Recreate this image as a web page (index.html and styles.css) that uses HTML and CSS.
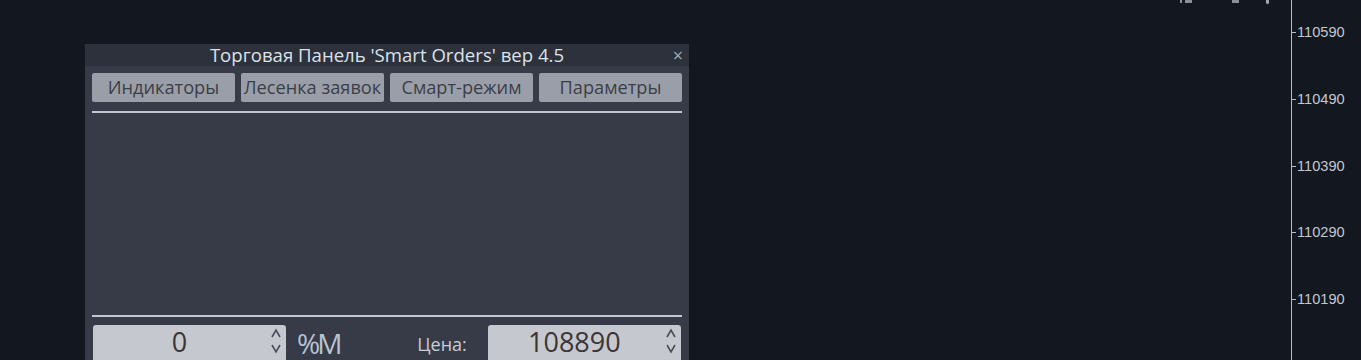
FILE: index.html
```html
<!DOCTYPE html>
<html lang="ru">
<head>
<meta charset="utf-8">
<link rel="stylesheet" href="styles.css">
</head>
<body>
<div class="screen">
  <div class="chart">
    <div class="toolbar">
      <span class="tb tb1"></span>
      <span class="tb tb2"></span>
      <span class="tb tb3"></span>
    </div>
    <div class="panel">
      <div class="titlebar">
        <span class="title">Торговая Панель 'Smart Orders' вер 4.5</span>
        <span class="close">×</span>
      </div>
      <div class="body">
        <div class="tabs">
          <div class="tab">Индикаторы</div>
          <div class="tab">Лесенка заявок</div>
          <div class="tab">Смарт-режим</div>
          <div class="tab">Параметры</div>
        </div>
        <div class="sep"></div>
        <div class="content"></div>
        <div class="sep"></div>
        <div class="inputs">
          <div class="field f-qty">
            <span class="val">0</span>
            <svg class="spin" width="20" height="35" viewBox="0 0 20 35"><polyline points="6,12 10,5 14,12"/><polyline points="6,20 10,27 14,20"/></svg>
          </div>
          <span class="unit">%M</span>
          <span class="label">Цена:</span>
          <div class="field f-price">
            <span class="val">108890</span>
            <svg class="spin" width="20" height="35" viewBox="0 0 20 35"><polyline points="6,12 10,5 14,12"/><polyline points="6,20 10,27 14,20"/></svg>
          </div>
        </div>
      </div>
    </div>
  </div>
  <div class="axis">
    <div class="tick">110590</div>
    <div class="tick">110490</div>
    <div class="tick">110390</div>
    <div class="tick">110290</div>
    <div class="tick">110190</div>
  </div>
</div>
</body>
</html>
```
FILE: styles.css
```css
* { box-sizing: border-box; }
html, body { margin: 0; padding: 0; }
body {
  width: 1361px;
  height: 360px;
  overflow: hidden;
  background: #131720;
  font-family: "Open Sans", "DejaVu Sans", sans-serif;
}
.screen {
  display: flex;
  height: 360px;
}
.chart {
  position: relative;
  flex: 1;
}
.toolbar {
  position: absolute;
  top: 0;
  left: 1178px;
  height: 4px;
}
.tb {
  position: absolute;
  top: 0;
  height: 3px;
  background: #8a8f99;
}
.tb1 { left: 2px; width: 2px; }
.tb1::after { content: ""; position: absolute; left: 5px; top: 0; width: 7px; height: 3px; background: #8a8f99; }
.tb2 { left: 54px; width: 7px; }
.tb3 { left: 88px; width: 3px; height: 4px; background: #a0a5ae; border-radius: 0 0 2px 2px; }

.panel {
  margin-left: 85px;
  margin-top: 44px;
  width: 604px;
  height: 316px;
  background: #363b47;
  display: flex;
  flex-direction: column;
}
.titlebar {
  height: 22px;
  background: #2c313c;
  display: flex;
  align-items: center;
  justify-content: center;
  position: relative;
}
.title {
  color: #dde1e8;
  font-size: 18.6px;
  line-height: 22px;
}
.close {
  position: absolute;
  right: 6px;
  top: 0;
  color: #a3a8b2;
  font-size: 18px;
  line-height: 22px;
}
.body {
  flex: 1;
  padding: 7px 7px 0 7px;
  display: flex;
  flex-direction: column;
}
.tabs {
  display: grid;
  grid-template-columns: repeat(4, 143px);
  column-gap: 6px;
  height: 29px;
}
.tab {
  background: #9a9ea8;
  color: #3a3e47;
  border-radius: 2px;
  font-size: 18.2px;
  line-height: 29px;
  text-align: center;
  white-space: nowrap;
  overflow: hidden;
}
.sep {
  height: 2px;
  background: #c2c6ce;
  width: 590px;
  margin-top: 9px;
}
.content {
  flex: 0 0 193px;
}
.inputs {
  margin-top: 8px;
  display: flex;
  align-items: flex-start;
  height: 35px;
}
.field {
  position: relative;
  background: #c5c8ce;
  border-radius: 3px;
  height: 40px;
  display: flex;
}
.f-qty { width: 193px; margin-left: 1px; }
.f-price { width: 193px; }
.val {
  flex: 1;
  text-align: center;
  color: #3b3535;
  font-size: 27px;
  line-height: 34px;
}
.spin {
  flex: 0 0 20px;
  fill: none;
  stroke: #4a4d58;
  stroke-width: 1.6;
}
.unit {
  color: #b9c3d3;
  font-size: 28px;
  line-height: 36px;
  margin-left: 11px;
  letter-spacing: -3px;
}
.label {
  color: #c9cdd5;
  font-size: 18px;
  line-height: 38px;
  margin-left: 78px;
  margin-right: 21px;
}
.axis {
  width: 70px;
  border-left: 1px solid #b7bcc5;
  padding-top: 23px;
  display: flex;
  flex-direction: column;
  gap: 48.75px;
}
.tick {
  position: relative;
  height: 18px;
  line-height: 18px;
  font-family: "Liberation Sans", "DejaVu Sans", sans-serif;
  font-size: 14.6px;
  color: #c3c7cf;
  padding-left: 5px;
}
.tick::before {
  content: "";
  position: absolute;
  left: 0;
  top: 9px;
  width: 4px;
  height: 1px;
  background: #b7bcc5;
}
```
